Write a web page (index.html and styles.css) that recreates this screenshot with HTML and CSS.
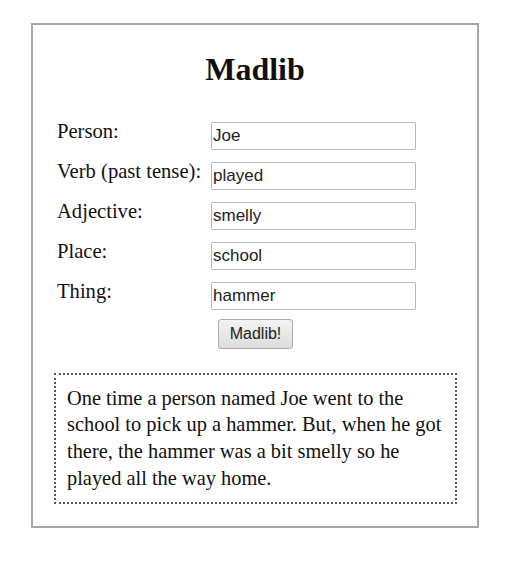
FILE: index.html
```html
<!DOCTYPE html>
<html>
<head>
<meta charset="utf-8">
<title>Madlib</title>
<link rel="stylesheet" href="styles.css">
</head>
<body>
<div class="card">
  <h1 class="title">Madlib</h1>
  <form class="form">
    <div class="row"><label class="label">Person:</label><input class="field" type="text" value="Joe"></div>
    <div class="row"><label class="label">Verb (past tense):</label><input class="field" type="text" value="played"></div>
    <div class="row"><label class="label">Adjective:</label><input class="field" type="text" value="smelly"></div>
    <div class="row"><label class="label">Place:</label><input class="field" type="text" value="school"></div>
    <div class="row"><label class="label">Thing:</label><input class="field" type="text" value="hammer"></div>
    <div class="actions"><button class="btn" type="button">Madlib!</button></div>
  </form>
  <div class="story">One time a person named Joe went to the school to pick up a hammer. But, when he got there, the hammer was a bit smelly so he played all the way home.</div>
</div>
</body>
</html>
```
FILE: styles.css
```css
html, body {
  margin: 0;
  padding: 0;
  background: #ffffff;
}
body {
  font-family: "Liberation Serif", "Times New Roman", serif;
  color: #111;
}
.card {
  box-sizing: border-box;
  margin: 23px 0 0 31px;
  width: 448px;
  height: 505px;
  border: 2px solid #a7a7a7;
  display: flex;
  flex-direction: column;
}
.title {
  margin: 26px 0 0;
  font-size: 32px;
  line-height: 36px;
  font-weight: bold;
  text-align: center;
}
.form {
  margin: 35px 0 0 24px;
  display: flex;
  flex-direction: column;
  gap: 12px;
}
.row {
  display: flex;
  align-items: flex-start;
}
.label {
  width: 154px;
  font-size: 20.6px;
  line-height: 19px;
}
.field {
  box-sizing: border-box;
  width: 205px;
  height: 28px;
  margin: 0;
  padding: 0 0 0 1px;
  border: 1px solid #b9b9b9;
  border-radius: 2px;
  font-family: "Liberation Sans", Arial, sans-serif;
  font-size: 17px;
  color: #222;
  background: #fff;
}
.actions {
  margin: -3px 0 0 161px;
}
.btn {
  box-sizing: border-box;
  width: 75px;
  height: 30px;
  padding: 0;
  border: 1px solid #acacac;
  border-radius: 3px;
  background: linear-gradient(#f3f3f3, #dcdcdc);
  font-family: "Liberation Sans", Arial, sans-serif;
  font-size: 16px;
  color: #222;
}
.story {
  box-sizing: border-box;
  margin: 24px 20px 0 21px;
  height: 131px;
  border: 2px dotted #555;
  padding: 9.6px 2px 0 11px;
  font-size: 20.4px;
  line-height: 26.7px;
}
```
